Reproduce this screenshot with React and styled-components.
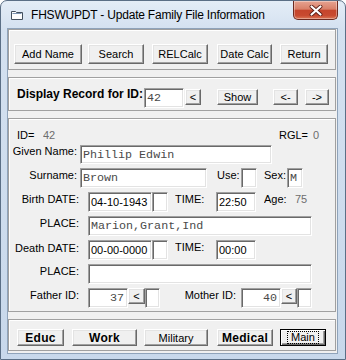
import React from "react";
import styled, { createGlobalStyle } from "styled-components";

const GlobalStyle = createGlobalStyle`
  html, body {
    margin: 0;
    padding: 0;
    background: #fff;
  }
  body {
    font-family: "Liberation Sans", Arial, sans-serif;
  }
`;

const Window = styled.div`
  width: 346px;
  height: 360px;
  box-sizing: border-box;
  border: 1px solid #5b6f86;
  border-radius: 7px 7px 0 0;
  background: linear-gradient(to bottom, #e4edf7 0px, #d4e1f0 28px, #c8d8eb 100%);
  display: flex;
  flex-direction: column;
  overflow: hidden;
`;

const TitleBar = styled.div`
  height: 27px;
  flex-shrink: 0;
  display: flex;
  align-items: flex-start;
`;

const TitleIcon = styled.svg`
  margin: 8px 0 0 10px;
  flex-shrink: 0;
`;

const TitleText = styled.div`
  margin: 7px 0 0 7px;
  font-size: 12px;
  line-height: 14px;
  letter-spacing: -0.2px;
  color: #000;
  white-space: nowrap;
`;

const CloseBtn = styled.div`
  box-sizing: border-box;
  width: 45px;
  height: 19px;
  margin: 0 7px 0 auto;
  border: 1px solid #6d2a20;
  border-top: none;
  border-radius: 0 0 5px 5px;
  background: linear-gradient(
    to bottom,
    #e6a391 0%,
    #d98069 45%,
    #c5452c 52%,
    #c84a30 80%,
    #db7656 100%
  );
  box-shadow: inset 0 0 0 1px rgba(255, 255, 255, 0.35);
  display: flex;
  align-items: center;
  justify-content: center;
`;

const Client = styled.div`
  margin: 0 7px 5px 6px;
  border: 1px solid #8fa3ba;
  background: #f0f0f0;
  flex: 1;
  display: flex;
  flex-direction: column;
  gap: 7px;
  padding-right: 1px;
`;

const Panel = styled.div`
  box-sizing: border-box;
  height: ${(p) => p.$h}px;
  flex-shrink: 0;
  border: 1px solid #a0a0a0;
  box-shadow: inset 1px 1px 0 #fff;
  padding: ${(p) => p.$pad || "0"};
  display: flex;
  flex-direction: ${(p) => (p.$col ? "column" : "row")};
  align-items: flex-start;
`;

const Btn = styled.button`
  box-sizing: border-box;
  flex: none;
  width: ${(p) => p.$w}px;
  height: ${(p) => p.$h || 20}px;
  margin: ${(p) => p.$mt || 0}px 0 0 ${(p) => p.$ml || 0}px;
  padding: 0;
  background: #f0f0f0;
  border: 1px solid;
  border-color: #fff #696969 #696969 #fff;
  box-shadow: inset -1px -1px 0 #a0a0a0, inset 1px 1px 0 #e3e3e3;
  display: flex;
  align-items: center;
  justify-content: center;
  font-family: "Liberation Sans", Arial, sans-serif;
  font-size: ${(p) => (p.$bold ? 12 : 11)}px;
  font-weight: ${(p) => (p.$bold ? "bold" : "normal")};
  letter-spacing: ${(p) => (p.$bold ? "0.3px" : "normal")};
  color: #000;
`;

const DefaultBtn = styled(Btn)`
  border: 1px solid #000;
  box-shadow: inset 1px 1px 0 #fff, inset -1px -1px 0 #696969,
    inset -2px -2px 0 #a0a0a0;
`;

const FocusRect = styled.span`
  border: 1px dotted #000;
  padding: 0 3px;
  line-height: 11px;
`;

const Label = styled.div`
  box-sizing: border-box;
  flex: none;
  width: ${(p) => p.$w}px;
  margin: ${(p) => p.$mt || 0}px 0 0 ${(p) => p.$ml || 0}px;
  text-align: ${(p) => (p.$right ? "right" : "left")};
  font-size: ${(p) => (p.$bold ? 12 : 11)}px;
  font-weight: ${(p) => (p.$bold ? "bold" : "normal")};
  line-height: 14px;
  color: ${(p) => (p.$gray ? "#6d6d6d" : "#000")};
  white-space: nowrap;
  overflow: hidden;
`;

const Field = styled.div`
  box-sizing: border-box;
  flex: none;
  width: ${(p) => p.$w}px;
  height: ${(p) => p.$h || 20}px;
  margin-left: ${(p) => p.$ml || 0}px;
  background: #fff;
  border: 1px solid;
  border-color: #a0a0a0 #fff #fff #a0a0a0;
  box-shadow: inset 1px 1px 0 #696969, inset -1px -1px 0 #e3e3e3;
  padding: 0 ${(p) => (p.$right ? 3 : 0)}px 0 2px;
  display: flex;
  align-items: center;
  justify-content: ${(p) => (p.$right ? "flex-end" : "flex-start")};
  font-family: ${(p) =>
    p.$mono
      ? '"Liberation Mono", "Courier New", monospace'
      : '"Liberation Sans", Arial, sans-serif'};
  font-size: ${(p) => (p.$mono ? 11.7 : 11)}px;
  color: ${(p) => (p.$mono ? "#4a4a4a" : "#000")};
  white-space: nowrap;
  overflow: hidden;
`;

const IdRow = styled.div`
  height: 14px;
  margin: 9px 0 0 8px;
  display: flex;
`;

const Rows = styled.div`
  margin-top: 3px;
  display: flex;
  flex-direction: column;
  gap: 4px;
`;

const Row = styled.div`
  height: ${(p) => p.$h || 20}px;
  display: flex;
  align-items: flex-start;
`;

const App = () => {
  return (
    <>
      <GlobalStyle />
      <Window>
        <TitleBar>
          <TitleIcon width="13" height="12" viewBox="0 0 13 12">
            <path
              d="M0.5 2.5 H4.5 L5.5 3.5 H11.5 V10.5 H0.5 Z"
              fill="#fdfdfd"
              stroke="#44505e"
            />
            <path d="M1.5 4.5 H10.5" stroke="#7d95b3" />
          </TitleIcon>
          <TitleText>FHSWUPDT - Update Family File Information</TitleText>
          <CloseBtn>
            <svg width="14" height="11" viewBox="0 0 14 11">
              <path
                d="M2.5 1.5 L11.5 9.5 M11.5 1.5 L2.5 9.5"
                stroke="#5a1d14"
                strokeWidth="3.8"
                strokeLinecap="round"
              />
              <path
                d="M2.5 1.5 L11.5 9.5 M11.5 1.5 L2.5 9.5"
                stroke="#fff"
                strokeWidth="2.2"
                strokeLinecap="round"
              />
            </svg>
          </CloseBtn>
        </TitleBar>

        <Client>
          <Panel $h={41} $pad="14px 0 0 5px">
            <Btn $w={68}>Add Name</Btn>
            <Btn $w={56} $ml={6}>Search</Btn>
            <Btn $w={56} $ml={8}>RELCalc</Btn>
            <Btn $w={55} $ml={9}>Date Calc</Btn>
            <Btn $w={48} $ml={8}>Return</Btn>
          </Panel>

          <Panel $h={34} $pad="10px 0 0 8px">
            <Label $w={127} $bold $mt={-1}>
              Display Record for ID:
            </Label>
            <Field $w={40} $mono>
              42
            </Field>
            <Btn $w={16} $h={16} $ml={1} $mt={1}>
              &lt;
            </Btn>
            <Btn $w={41} $h={16} $ml={16} $mt={1}>
              Show
            </Btn>
            <Btn $w={25} $h={16} $ml={15} $mt={1}>
              &lt;-
            </Btn>
            <Btn $w={24} $h={16} $ml={7} $mt={1}>
              -&gt;
            </Btn>
          </Panel>

          <Panel $h={194} $col>
            <IdRow>
              <Label $w={26}>ID=</Label>
              <Label $w={236} $gray>
                42
              </Label>
              <Label $w={34}>RGL=</Label>
              <Label $w={12} $gray>
                0
              </Label>
            </IdRow>
            <Rows>
              <Row $h={19}>
                <Label $w={68} $right $mt={-1}>
                  Given Name:
                </Label>
                <Field $w={192} $h={19} $ml={3} $mono>
                  Phillip Edwin
                </Field>
              </Row>
              <Row>
                <Label $w={68} $right>
                  Surname:
                </Label>
                <Field $w={127} $ml={3} $mono>
                  Brown
                </Field>
                <Label $w={23} $ml={10}>
                  Use:
                </Label>
                <Field $w={16} $ml={1} />
                <Label $w={23} $ml={7}>
                  Sex:
                </Label>
                <Field $w={16} $mono>
                  M
                </Field>
              </Row>
              <Row>
                <Label $w={70} $right>
                  Birth DATE:
                </Label>
                <Field $w={64} $ml={9}>
                  04-10-1943
                </Field>
                <Field $w={16} />
                <Label $w={41} $ml={7}>
                  TIME:
                </Label>
                <Field $w={40}>22:50</Field>
                <Label $w={31} $ml={8}>
                  Age:
                </Label>
                <Label $w={20} $gray>
                  75
                </Label>
              </Row>
              <Row>
                <Label $w={70} $right>
                  PLACE:
                </Label>
                <Field $w={224} $ml={9} $mono>
                  Marion,Grant,Ind
                </Field>
              </Row>
              <Row>
                <Label $w={70} $right $mt={1}>
                  Death DATE:
                </Label>
                <Field $w={64} $ml={9}>
                  00-00-0000
                </Field>
                <Field $w={16} />
                <Label $w={41} $ml={7}>
                  TIME:
                </Label>
                <Field $w={40}>00:00</Field>
              </Row>
              <Row>
                <Label $w={70} $right>
                  PLACE:
                </Label>
                <Field $w={224} $ml={9} />
              </Row>
              <Row>
                <Label $w={70} $right>
                  Father ID:
                </Label>
                <Field $w={40} $ml={9} $mono $right>
                  37
                </Field>
                <Btn $w={17} $h={16}>
                  &lt;
                </Btn>
                <Field $w={15} />
                <Label $w={72} $ml={4} $right>
                  Mother ID:
                </Label>
                <Field $w={40} $ml={5} $mono $right>
                  40
                </Field>
                <Btn $w={16} $h={16}>
                  &lt;
                </Btn>
                <Field $w={15} />
              </Row>
            </Rows>
          </Panel>

          <Panel $h={32} $pad="9px 0 0 8px">
            <Btn $w={47} $h={17} $bold>
              Educ
            </Btn>
            <Btn $w={65} $h={17} $ml={8} $bold>
              Work
            </Btn>
            <Btn $w={64} $h={17} $ml={7}>
              Military
            </Btn>
            <Btn $w={56} $h={17} $ml={9} $bold>
              Medical
            </Btn>
            <DefaultBtn $w={46} $h={17} $ml={7}>
              <FocusRect>Main</FocusRect>
            </DefaultBtn>
          </Panel>
        </Client>
      </Window>
    </>
  );
};

export default App;
